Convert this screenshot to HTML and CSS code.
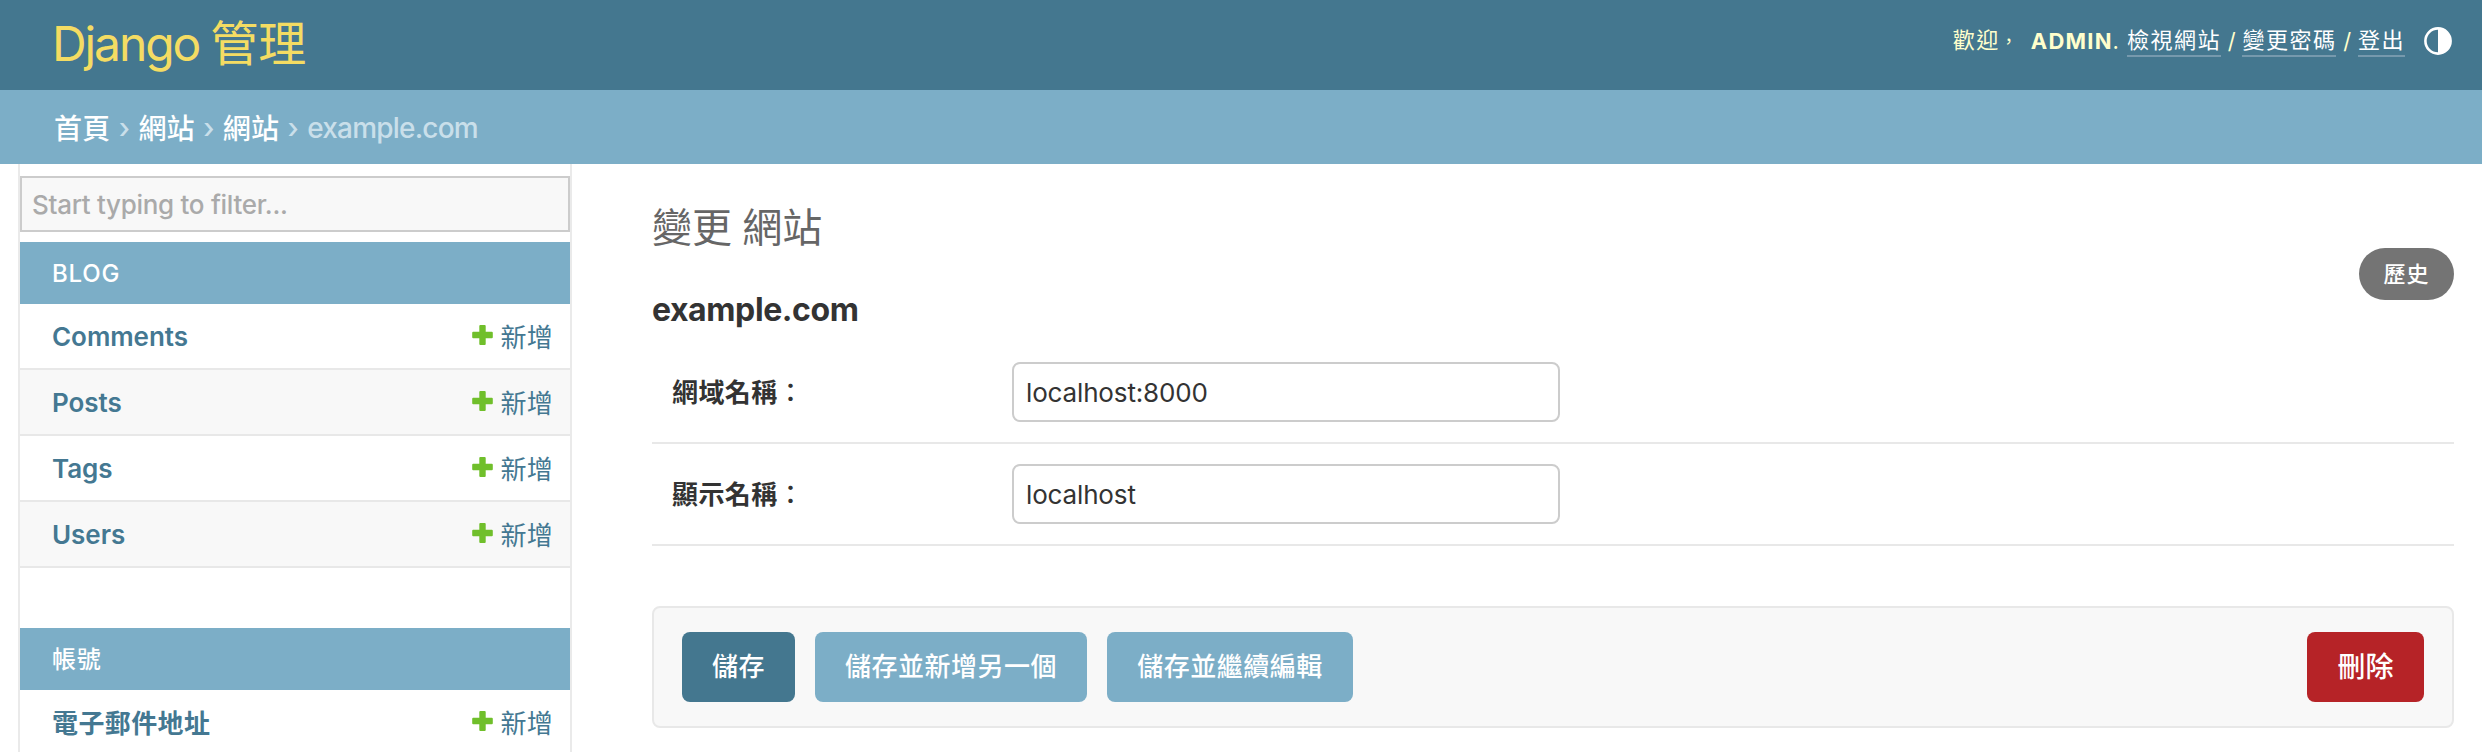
FILE: index.html
```html
<!DOCTYPE html>
<html lang="zh-Hant">
<head>
<meta charset="utf-8">
<title>變更 網站 | Django 管理</title>
<link rel="stylesheet" href="styles.css">
</head>
<body>
<header class="header">
  <h1 class="brand"><span class="brand-latin">Django</span><span>管理</span></h1>
  <div class="user-tools">
    <span class="welcome">歡迎<span class="comma">，</span></span><strong class="user">ADMIN</strong><span class="dot">.</span>
    <a class="tool">檢視網站</a><span class="slash">/</span><a class="tool">變更密碼</a><span class="slash">/</span><a class="tool">登出</a>
    <svg class="theme" viewBox="0 0 28 28"><circle cx="14" cy="14" r="12.6" fill="none" stroke="#fff" stroke-width="2.6"/><path d="M14 1a13 13 0 0 1 0 26z" fill="#fff"/></svg>
  </div>
</header>
<nav class="breadcrumbs">
  <a>首頁</a><span class="sep">›</span><a>網站</a><span class="sep">›</span><a>網站</a><span class="sep">›</span><span class="current">example.com</span>
</nav>
<div class="main">
  <aside class="sidebar">
    <input class="filter" type="text" placeholder="Start typing to filter...">
    <section class="module">
      <h2 class="caption">BLOG</h2>
      <div class="row"><a class="model">Comments</a><a class="add"><svg class="plus" viewBox="0 0 22 22"><path d="M8.300 2q0-1 1-1h4.400q1 0 1 1v5.800H20.800q1 0 1 1V13.200q0 1-1 1h-6.100V20q0 1-1 1H9.300q-1 0-1-1v-5.800H2.200q-1 0-1-1V8.800q0-1 1-1H8.300z"/></svg>新增</a></div>
      <div class="row alt"><a class="model">Posts</a><a class="add"><svg class="plus" viewBox="0 0 22 22"><path d="M8.300 2q0-1 1-1h4.400q1 0 1 1v5.800H20.800q1 0 1 1V13.200q0 1-1 1h-6.100V20q0 1-1 1H9.300q-1 0-1-1v-5.800H2.200q-1 0-1-1V8.800q0-1 1-1H8.300z"/></svg>新增</a></div>
      <div class="row"><a class="model">Tags</a><a class="add"><svg class="plus" viewBox="0 0 22 22"><path d="M8.300 2q0-1 1-1h4.400q1 0 1 1v5.800H20.800q1 0 1 1V13.200q0 1-1 1h-6.100V20q0 1-1 1H9.300q-1 0-1-1v-5.800H2.200q-1 0-1-1V8.800q0-1 1-1H8.300z"/></svg>新增</a></div>
      <div class="row alt"><a class="model">Users</a><a class="add"><svg class="plus" viewBox="0 0 22 22"><path d="M8.300 2q0-1 1-1h4.400q1 0 1 1v5.800H20.800q1 0 1 1V13.200q0 1-1 1h-6.100V20q0 1-1 1H9.300q-1 0-1-1v-5.800H2.200q-1 0-1-1V8.800q0-1 1-1H8.300z"/></svg>新增</a></div>
    </section>
    <section class="module">
      <h2 class="caption">帳號</h2>
      <div class="row"><a class="model cjk">電子郵件地址</a><a class="add"><svg class="plus" viewBox="0 0 22 22"><path d="M8.300 2q0-1 1-1h4.400q1 0 1 1v5.800H20.800q1 0 1 1V13.200q0 1-1 1h-6.100V20q0 1-1 1H9.300q-1 0-1-1v-5.800H2.200q-1 0-1-1V8.800q0-1 1-1H8.300z"/></svg>新增</a></div>
    </section>
  </aside>
  <main class="content">
    <div class="heading">
      <div>
        <h1 class="title">變更 網站</h1>
        <h2 class="object">example.com</h2>
      </div>
      <a class="history">歷史</a>
    </div>
    <form>
      <div class="field"><label class="label">網域名稱<span class="colon">：</span></label><input class="text" type="text" value="localhost:8000"></div>
      <div class="field"><label class="label">顯示名稱<span class="colon">：</span></label><input class="text" type="text" value="localhost"></div>
      <div class="submit-row">
        <button class="btn primary" type="button">儲存</button>
        <button class="btn another" type="button">儲存並新增另一個</button>
        <button class="btn continue" type="button">儲存並繼續編輯</button>
        <a class="btn delete">刪除</a>
      </div>
    </form>
  </main>
</div>
</body>
</html>
```

FILE: styles.css
```css
* { box-sizing: border-box; }
html, body { height: 100%; overflow: hidden; }
body {
  margin: 0;
  display: flex;
  flex-direction: column;
  background: #fff;
  color: #333;
  font-family: Inter, "Noto Sans CJK TC", sans-serif;
  font-size: 26px;
}
h1, h2 { margin: 0; }
input, button { font-family: inherit; }

.header {
  flex: 0 0 90px;
  display: flex;
  justify-content: space-between;
  align-items: flex-start;
  padding: 0 30px 0 52px;
  background: #44778f;
}
.brand {
  display: flex;
  gap: 11px;
  font-size: 48px;
  line-height: 87px;
  font-weight: 380;
  color: #f4dc63;
}
.brand-latin { letter-spacing: -2.1px; }
.user-tools {
  display: flex;
  align-items: center;
  height: 82px;
  font-size: 22px;
  letter-spacing: 1.5px;
  color: #ffffcc;
  line-height: 30px;
}
.welcome { width: 78px; white-space: nowrap; }
.comma { display: inline-block; font-size: 18px; }
.user { font-weight: 700; letter-spacing: 1.2px; }
.dot { margin-right: 8px; letter-spacing: 0; }
.tool { color: #fff; height: 31px; line-height: 28px; border-bottom: 2px solid #7699ad; }
.slash { width: 21.5px; text-align: center; letter-spacing: 0; }
.theme { width: 28px; height: 28px; margin-left: 19px; }

.breadcrumbs {
  flex: 0 0 74px;
  display: flex;
  align-items: center;
  padding: 0 54px 1px;
  background: #7caec7;
  color: #c9dfea;
  font-size: 28px;
}
.breadcrumbs a { color: #fff; font-weight: 500; letter-spacing: .2px; }
.sep { width: 28px; padding-top: 2px; text-align: center; font-weight: 500; }
.current { letter-spacing: -.8px; font-weight: 450; padding-top: 2px; }

.main { flex: 1; min-height: 0; display: flex; }
.sidebar {
  flex: 0 0 554px;
  margin-left: 18px;
  padding-top: 12px;
  border: solid #eaeaea;
  border-width: 0 2px;
}
.filter {
  display: block;
  width: 100%;
  height: 56px;
  margin-bottom: 10px;
  padding: 0 10px;
  border: 2px solid #ccc;
  background: #f8f8f8;
  font-size: 26px;
  font-weight: 450;
  letter-spacing: -.3px;
}
.filter::placeholder { color: #aaa; }
.module { margin-bottom: 60px; }
.caption {
  height: 62px;
  line-height: 64px;
  padding-left: 32px;
  background: #7caec7;
  color: #fff;
  font-size: 24px;
  font-weight: 500;
  letter-spacing: .8px;
}
.row {
  display: flex;
  justify-content: space-between;
  align-items: center;
  height: 66px;
  padding: 0 17px 0 32px;
  border-bottom: 2px solid #e8e8e8;
  color: #447892;
}
.alt { background: #f8f8f8; }
.model { font-weight: 600; letter-spacing: -.05px; }
.cjk { letter-spacing: .4px; margin-top: -2px; }
.add { display: flex; align-items: center; gap: 8px; margin-top: -2px; letter-spacing: .2px; }
.plus { width: 22px; height: 22px; fill: #70bf2b; }

.content { flex: 1; padding: 41px 28px 0 80px; }
.heading { display: flex; justify-content: space-between; height: 137px; }
.title { font-size: 40px; font-weight: 380; line-height: 46px; color: #666; word-spacing: -1px; }
.object { margin-top: 39px; font-size: 32px; font-weight: 700; line-height: 40px; letter-spacing: -.4px; }
.history {
  width: 95px;
  height: 52px;
  margin-top: 43px;
  border-radius: 26px;
  background: #747474;
  color: #fff;
  font-size: 22px;
  font-weight: 500;
  letter-spacing: 1px;
  line-height: 52px;
  text-align: center;
}
.field {
  display: flex;
  align-items: center;
  height: 102px;
  padding: 0 20px;
  border-bottom: 2px solid #e8e8e8;
}
.label { width: 340px; padding-bottom: 3px; font-weight: 700; letter-spacing: .4px; }
.colon { font-weight: 500; }
.text {
  width: 548px;
  height: 60px;
  padding: 0 12px;
  border: 2px solid #ccc;
  border-radius: 8px;
  background: #fff;
  color: #333;
  font-size: 26px;
  letter-spacing: -.15px;
}
.submit-row {
  display: flex;
  align-items: center;
  gap: 20px;
  height: 122px;
  margin-top: 60px;
  padding: 0 28px;
  border: 2px solid #e8e8e8;
  border-radius: 8px;
  background: #f8f8f8;
}
.btn {
  height: 70px;
  padding: 0;
  border: 0;
  border-radius: 8px;
  color: #fff;
  font-size: 26px;
  font-weight: 500;
  letter-spacing: .5px;
  line-height: 70px;
  text-align: center;
}
.primary { width: 113px; background: #44778f; }
.another { width: 272px; background: #7caec7; }
.continue { width: 246px; background: #7caec7; }
.delete { width: 117px; margin-left: auto; background: #b62327; font-size: 28px; line-height: 71px; letter-spacing: 0; }
```
